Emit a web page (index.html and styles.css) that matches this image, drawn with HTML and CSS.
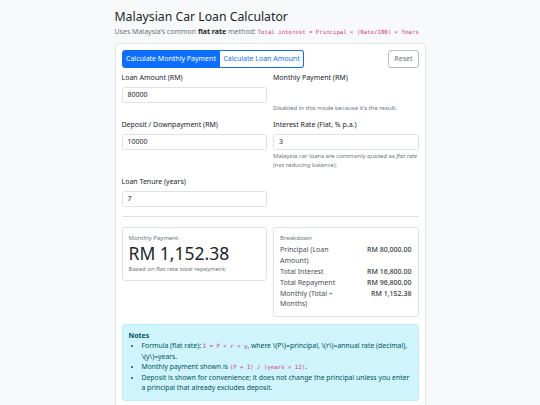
FILE: index.html
```html
<!DOCTYPE html>
<html lang="en">
<head>
<meta charset="utf-8">
<title>Malaysian Car Loan Calculator</title>
<link rel="stylesheet" href="styles.css">
</head>
<body>
<main class="container">
  <h1 class="title">Malaysian Car Loan Calculator</h1>
  <p class="subtitle">Uses Malaysia’s common <strong>flat rate</strong> method: <code>Total interest = Principal × (Rate/100) × Years</code></p>

  <section class="card">
    <div class="toolbar">
      <div class="btn-group">
        <button class="btn btn-primary">Calculate Monthly Payment</button>
        <button class="btn btn-outline-primary">Calculate Loan Amount</button>
      </div>
      <button class="btn btn-reset">Reset</button>
    </div>

    <div class="form-grid">
      <div class="field">
        <label class="label">Loan Amount (RM)</label>
        <div class="input">80000</div>
      </div>
      <div class="field">
        <label class="label">Monthly Payment (RM)</label>
        <div class="input input-hidden"></div>
        <div class="help">Disabled in this mode because it’s the result.</div>
      </div>
      <div class="field">
        <label class="label">Deposit / Downpayment (RM)</label>
        <div class="input">10000</div>
      </div>
      <div class="field">
        <label class="label">Interest Rate (Flat, % p.a.)</label>
        <div class="input">3</div>
        <div class="help">Malaysia car loans are commonly quoted as <em>flat rate</em> (not reducing balance).</div>
      </div>
      <div class="field">
        <label class="label">Loan Tenure (years)</label>
        <div class="input">7</div>
      </div>
    </div>

    <hr class="divider">

    <div class="results">
      <div class="result-card">
        <div class="small-label">Monthly Payment</div>
        <div class="big-number">RM 1,152.38</div>
        <div class="small-note">Based on flat rate total repayment.</div>
      </div>
      <div class="result-card">
        <div class="small-label">Breakdown</div>
        <div class="breakdown">
          <div class="bk-label">Principal (Loan Amount)</div><div class="bk-value">RM 80,000.00</div>
          <div class="bk-label">Total Interest</div><div class="bk-value">RM 16,800.00</div>
          <div class="bk-label">Total Repayment</div><div class="bk-value">RM 96,800.00</div>
          <div class="bk-label">Monthly (Total ÷ Months)</div><div class="bk-value">RM 1,152.38</div>
        </div>
      </div>
    </div>

    <div class="notes">
      <div class="notes-title">Notes</div>
      <ul class="notes-list">
        <li>Formula (flat rate): <code>I = P × r × y</code>, where <span class="nowrap">\(P\)=principal,</span> <span class="nowrap">\(r\)=annual</span> rate (decimal), <span class="nowrap">\(y\)=years.</span></li>
        <li>Monthly payment shown is <code>(P + I) / (years × 12)</code>.</li>
        <li>Deposit is shown for convenience; it does not change the principal unless you enter a principal that already excludes deposit.</li>
      </ul>
    </div>
  </section>
</main>
</body>
</html>
```

FILE: styles.css
```css
* { box-sizing: border-box; }

html, body {
  margin: 0;
  padding: 0;
}

body {
  background: #f8f9fa;
  color: #212529;
  font-family: "Noto Sans", "Open Sans", sans-serif;
  font-size: 7px;
  line-height: 1.5;
}

.container {
  width: 311px;
  margin: 0 auto;
  padding-top: 10px;
}

.title {
  margin: 0 0 2px;
  font-size: 12.25px;
  font-weight: 400;
  line-height: 1.2;
}

.subtitle {
  margin: 0 0 6px;
  color: #6c757d;
  line-height: 10.5px;
}

.subtitle strong { color: #212529; font-weight: 700; }

code {
  font-family: "DejaVu Sans Mono", "Liberation Mono", monospace;
  font-size: 5.7px;
  line-height: 1;
  color: #d63384;
}

.nowrap { white-space: nowrap; }

.card {
  background: #fff;
  border: 1px solid #e3e6ea;
  border-radius: 4px;
  padding: 6px 6px 10px;
  box-shadow: 0 1px 2px rgba(0,0,0,0.04);
}

.toolbar {
  display: flex;
  justify-content: space-between;
  align-items: center;
  margin-bottom: 5px;
}

.btn-group { display: flex; }

.btn {
  font-family: inherit;
  font-size: 7px;
  line-height: 10.5px;
  padding: 2.5px 4px;
  border: 1px solid;
  background: #fff;
  margin: 0;
  border-radius: 3px;
}

.btn-primary {
  background: #0d6efd;
  border-color: #0d6efd;
  color: #fff;
  border-radius: 3px 0 0 3px;
  padding: 2.5px 3.5px;
}

.btn-outline-primary {
  color: #0d6efd;
  border-color: #0d6efd;
  border-left-width: 0;
  border-radius: 0 3px 3px 0;
  padding: 2.5px 3px;
}

.btn-reset {
  color: #6c757d;
  border-color: #b8bdc2;
  padding: 2.5px 5px;
}

.form-grid {
  display: grid;
  grid-template-columns: 1fr 1fr;
  column-gap: 6px;
  row-gap: 7px;
}

.field { display: flex; flex-direction: column; }

.label {
  display: block;
  margin-bottom: 3.5px;
  line-height: 10.5px;
}

.input {
  height: 16px;
  border: 1px solid #dee2e6;
  border-radius: 2.5px;
  padding: 0 5px;
  line-height: 14px;
  background: #fff;
}

.input-hidden { visibility: hidden; }

.help {
  margin-top: 1.5px;
  font-size: 5.95px;
  line-height: 9px;
  color: #6c757d;
}

.divider {
  border: 0;
  border-top: 1px solid #dee2e6;
  margin: 9px 0 10px;
}

.results {
  display: grid;
  grid-template-columns: 1fr 1fr;
  column-gap: 6px;
  align-items: start;
}

.result-card {
  border: 1px solid #dee2e6;
  border-radius: 3px;
  padding: 6px;
}

.small-label {
  font-size: 6px;
  line-height: 9px;
  color: #6c757d;
}

.big-number {
  font-size: 17.5px;
  line-height: 21px;
  font-weight: 400;
}

.small-note {
  margin-top: 1px;
  font-size: 6px;
  line-height: 9px;
  color: #6c757d;
}

.breakdown {
  display: grid;
  grid-template-columns: 1fr 1fr;
  row-gap: 0.5px;
  margin-top: 2.5px;
}

.bk-label { color: #495057; line-height: 10.5px; }

.bk-value {
  text-align: right;
  font-weight: 500;
  line-height: 10.5px;
  color: #343a40;
}

.notes {
  margin-top: 7px;
  background: #cff4fc;
  border: 1px solid #b6effb;
  border-radius: 3px;
  padding: 6px;
  color: #055160;
}

.notes-title { font-weight: 700; line-height: 10.5px; }

.notes-list {
  margin: 0;
  padding-left: 13px;
  font-size: 6.85px;
}

.notes-list li { line-height: 10.5px; }
```
